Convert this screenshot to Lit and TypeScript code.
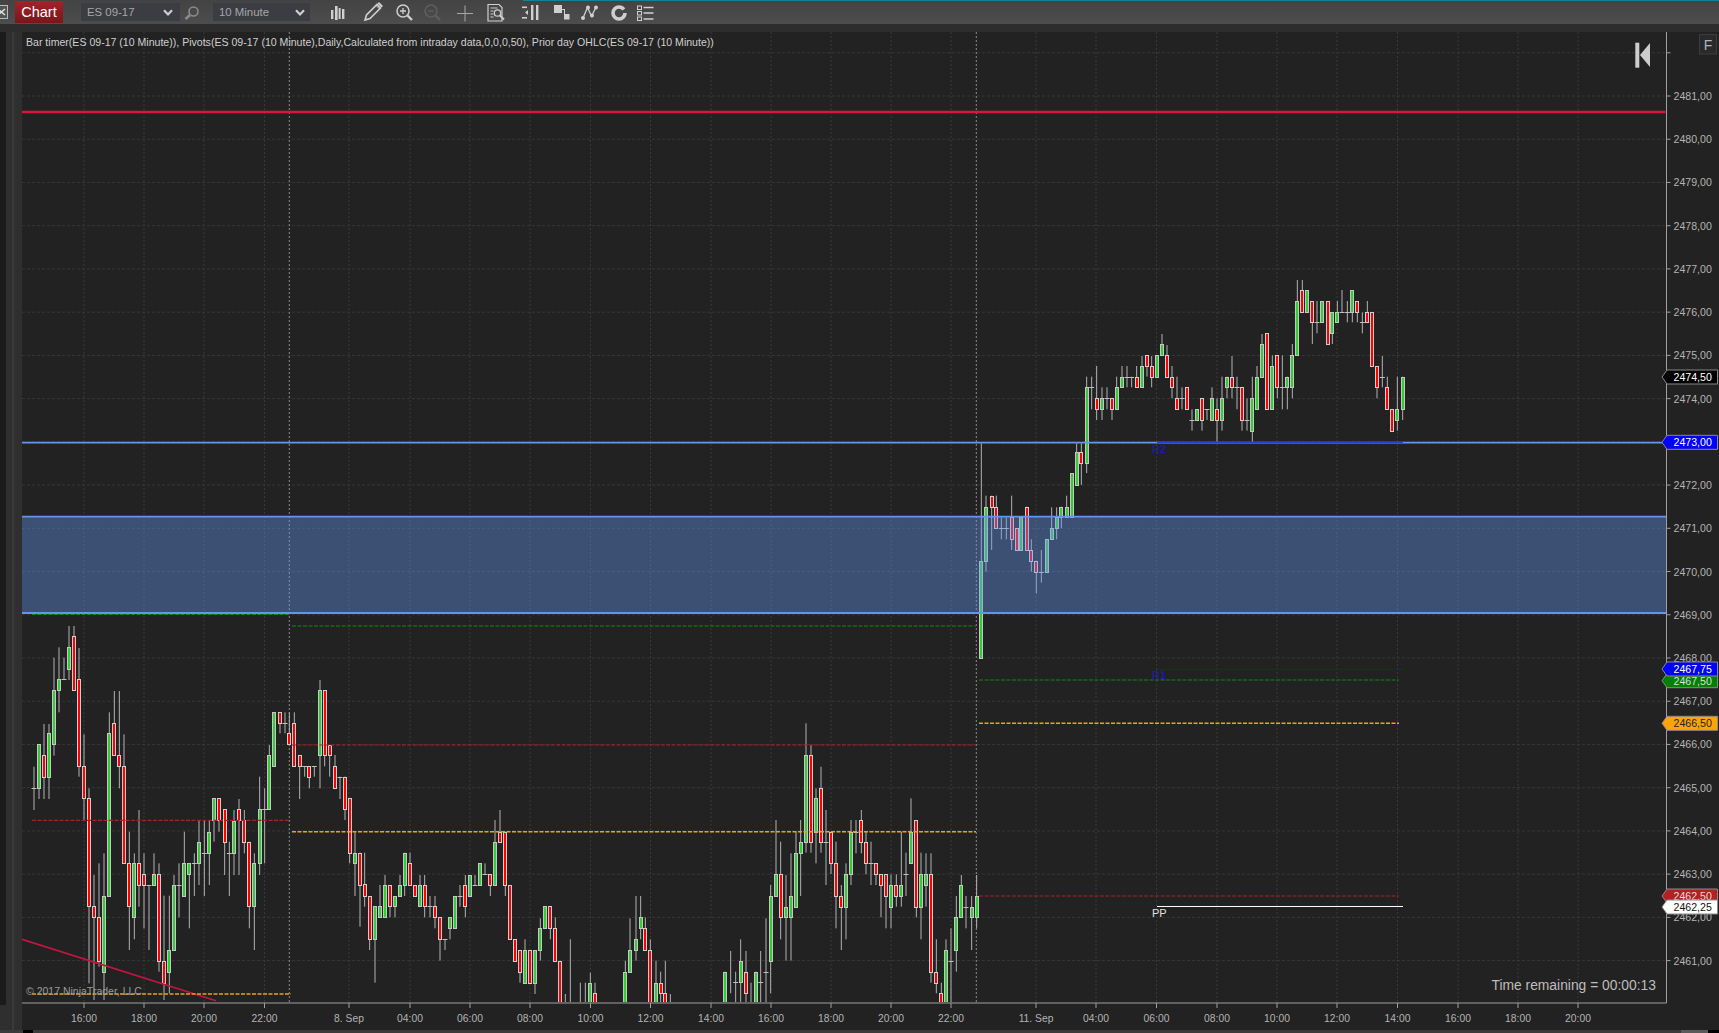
// NinjaTrader style chart window
import { LitElement, html, css, svg } from 'lit';
import { customElement } from 'lit/decorators.js';

const PLOT = { left: 22, right: 1666.5, top: 32, bottom: 1003 };
const priceY = (p: number) => 96 + (2481 - p) * 43.23;

// each row: x top bottom wickTop wickBottom kind, measured in 3x crops
const GROUPS: { ox: number; oy: number; rows: string }[] = [
	{ ox: 0, oy: 620, rows: `102 505 505 440 570 d;117 373 505 373 537 g;132 405 470 312 537 r;147 340 470 312 537 g;162 210 373 113 407 g;177 178 210 82 277 g;192 178 178 113 178 d;207 82 147 18 180 g;222 48 210 18 210 r;237 178 439 84 470 r;252 439 535 343 600 r;267 535 858 505 1090 r;282 858 892 765 1140 r;297 892 1022 730 1040 r;312 827 1055 700 1140 g;328 340 827 277 827 g;343 310 405 213 405 r;358 405 439 213 505 r;372 439 730 343 730 r;388 730 858 635 990 r;403 730 892 700 958 g;417 730 795 570 860 r;432 763 795 700 925 r;447 795 795 795 990 d;462 763 795 700 795 g;477 763 1022 730 1055 r;492 1022 1088 827 1140 r;508 990 1055 827 1120 g;522 795 990 765 990 g;537 795 795 730 892 d;553 730 828 635 828 g;568 730 763 730 925 g;583 730 730 700 828 d;597 665 730 603 795 g;613 698 698 603 828 d;628 635 698 600 795 g;642 535 600 535 665 g;657 535 600 535 635 r;674 568 665 568 765 r;688 698 698 665 828 d;702 603 698 570 765 g;717 568 600 537 765 r;733 600 665 570 700 r;748 665 858 665 925 r;763 730 858 700 990 g;779 568 730 470 765 g;794 568 568 505 730 d;808 405 568 375 568 g;822 276 439 276 439 g;840 276 310 276 340 r;855 310 310 277 340 d;868 340 373 277 373 r;883 310 439 277 439 r;899 405 439 405 537 r;914 439 439 439 470 d;928 439 470 439 505 r;943 439 439 439 470 d;960 210 405 180 505 g;974 210 405 210 439 r;989 375 405 375 470 r;1005 439 505 405 505 r;1020 470 470 470 537 d;1035 470 568 470 600 r;1049 535 698 535 730 r;1065 698 730 635 828 g` },
	{ ox: 360, oy: 660, rows: `0 578 675 578 800 r;14 673 708 578 740 r;29 708 838 708 870 r;45 738 838 738 968 g;60 738 772 675 772 g;75 675 772 645 772 g;90 675 738 675 772 r;105 708 738 708 772 g;120 675 708 645 708 g;134 578 675 578 708 g;150 610 675 578 675 r;165 675 708 675 708 r;180 675 738 645 738 g;194 675 738 645 772 r;210 738 738 708 772 d;225 738 772 708 805 r;240 772 838 772 902 r;255 838 838 838 870 d;270 772 805 772 838 g;285 708 805 708 805 g;300 708 708 675 740 d;316 675 738 645 772 r;331 645 708 645 708 g;345 675 675 645 675 d;360 610 675 610 675 g;375 643 643 610 643 d;391 643 675 643 708 r;405 545 675 480 675 g;420 515 545 450 545 r;436 515 675 515 708 r;451 675 838 675 838 r;465 838 902 838 902 r;480 870 935 870 968 r;495 870 968 838 968 g;511 870 968 870 968 r;525 870 968 870 1002 g;541 805 870 775 902 g;556 738 805 738 805 g;571 738 805 738 838 r;586 805 902 772 902 r;601 902 1030 902 1030 r;616 1002 1002 1002 1030 w;631 838 838 838 1030 w;661 968 968 968 1030 w;676 968 968 968 1030 w;691 968 1030 938 1030 g;705 1000 1030 968 1030 r;796 935 1030 902 1030 g;810 870 935 775 935 g;828 838 870 708 902 g;842 772 805 708 838 g;856 805 870 772 870 r;871 870 1030 838 1030 r;888 968 1030 902 1030 g;902 968 1000 935 1030 r;916 1000 1030 902 1030 r;931 1002 1002 1002 1030 w` },
	{ ox: 720, oy: 690, rows: `15 845 945 845 945 g;32 783 783 783 910 w;47 877 877 845 945 d;62 812 877 748 945 g;78 845 910 783 945 r;93 878 878 878 945 w;107 845 945 845 945 g;122 877 877 783 945 d;138 845 845 685 945 d;152 617 812 585 910 g;168 552 617 390 617 g;182 552 682 455 748 r;198 650 682 555 812 g;213 617 682 490 812 g;228 488 650 425 650 g;242 455 488 390 618 g;258 195 455 100 488 g;273 195 455 165 488 r;288 325 425 295 520 g;303 295 455 230 488 r;318 455 455 360 585 d;333 425 520 425 552 r;348 520 618 455 715 r;364 618 650 585 780 r;378 552 650 520 748 g;393 425 552 390 585 g;408 425 425 390 490 d;424 390 455 360 490 r;438 455 520 425 553 r;453 520 520 455 585 d;468 520 553 520 585 r;483 553 585 553 682 r;498 553 618 553 715 r;513 585 650 553 715 g;529 585 618 553 650 r;544 585 618 425 650 g;558 553 553 488 618 d;573 425 520 325 520 g;589 390 650 390 682 r;603 553 650 488 748 g;618 553 585 490 650 g;633 553 845 490 878 r;649 845 878 748 910 r;664 910 945 878 945 r;678 780 945 748 945 g;693 812 812 715 945 d;709 682 780 618 845 g;724 585 682 555 682 g;738 650 650 618 715 d;755 650 682 618 780 g;770 618 682 555 715 g` },
	{ ox: 960, oy: 430, rows: `64 392 683 40 683 g;78 230 392 197 425 g;95 197 230 197 360 r;109 230 295 197 295 r;124 295 295 262 328 d;139 295 295 262 328 d;155 262 328 197 360 r;170 295 360 295 360 r;184 262 360 262 360 g;200 230 360 230 360 r;214 360 392 328 425 r;229 392 425 392 490 r;244 425 425 360 458 d;260 328 425 328 425 g;275 295 328 232 328 g;290 262 295 232 328 g;304 230 262 230 295 g;320 230 262 197 262 g;335 130 262 130 262 g;350 67 165 40 165 g;364 67 100 40 165 r` },
	{ ox: 1060, oy: 270, rows: `80 352 579 320 609 g;95 352 352 320 418 d;110 385 418 288 450 r;126 385 418 352 450 g;141 385 385 352 418 d;156 385 418 385 450 r;170 352 418 320 418 g;186 320 352 288 352 g;201 320 320 288 352 d;215 320 320 320 352 d;230 320 352 288 352 r;246 287 352 258 352 g;261 256 288 256 320 r;275 288 320 258 352 r;290 256 320 256 320 g;306 222 256 192 256 g;321 256 320 225 320 r;336 320 352 288 385 r;351 385 418 320 418 r;366 385 385 352 418 d;381 352 418 352 418 r;396 450 450 418 482 d;411 418 450 418 450 g;426 385 450 385 482 r;441 418 418 418 450 d;456 385 450 352 450 g;471 418 450 385 515 r;486 385 450 320 482 g;501 320 352 320 385 g;516 320 352 258 385 r;531 352 352 320 418 d;546 352 450 352 482 r;561 450 450 385 482 d;577 385 482 320 515 g;591 320 418 288 418 g;606 222 320 192 320 g;621 190 418 190 418 r;637 288 418 256 418 g;652 256 352 256 385 r;667 352 352 256 418 d;682 320 352 320 418 g;697 256 352 222 385 g;712 93 256 30 256 g;727 60 127 30 127 r;741 60 127 60 127 g;757 93 157 93 222 r;771 157 157 93 190 d;786 93 157 93 157 g;803 93 222 93 222 r;817 127 190 127 222 g;832 127 157 93 157 g;846 127 127 60 127 d;862 127 127 93 157 d;877 60 127 60 157 g;892 93 127 93 157 r;907 157 157 127 190 d;922 127 157 93 157 r;937 127 288 127 288 r;951 288 352 288 385 r;967 320 320 258 352 d;982 352 418 320 418 r;997 418 482 418 482 r;1012 418 450 320 482 g;1028 320 418 320 450 g` },
];

const parseBars = () =>
	GROUPS.flatMap((g) =>
		g.rows.split(';').map((row) => {
			const [x, top, bot, wt, wb, kind] = row.trim().split(' ');
			return {
				x: g.ox + Number(x) / 3,
				top: g.oy + Number(top) / 3,
				bot: g.oy + Number(bot) / 3,
				wt: g.oy + Number(wt) / 3,
				wb: g.oy + Number(wb) / 3,
				kind,
			};
		}),
	);

const GRID_X = [84, 144, 204, 264.5, 349, 410, 470, 530, 590.5, 650.5, 711, 771, 831, 891, 951, 1036, 1096, 1156.5, 1217, 1277, 1337, 1397.5, 1458, 1518, 1578];
const TIME_LABELS = ['16:00', '18:00', '20:00', '22:00', '8. Sep', '04:00', '06:00', '08:00', '10:00', '12:00', '14:00', '16:00', '18:00', '20:00', '22:00', '11. Sep', '04:00', '06:00', '08:00', '10:00', '12:00', '14:00', '16:00', '18:00', '20:00'];
const PRICES = Array.from({ length: 21 }, (_, i) => 2461 + i);

const LEVELS = [
	{ x1: 32, x2: 289, y: 614.5, cls: 'lv-green' },
	{ x1: 292, x2: 976, y: 626, cls: 'lv-green' },
	{ x1: 979, x2: 1399, y: 680, cls: 'lv-green' },
	{ x1: 32, x2: 291, y: 820.3, cls: 'lv-red' },
	{ x1: 292, x2: 976, y: 745, cls: 'lv-red' },
	{ x1: 979, x2: 1399, y: 896, cls: 'lv-red' },
	{ x1: 32, x2: 291, y: 994, cls: 'lv-orange' },
	{ x1: 292, x2: 976, y: 831.7, cls: 'lv-orange' },
	{ x1: 979, x2: 1399, y: 723.3, cls: 'lv-orange' },
];

const TAGS = [
	{ y: 377, text: '2474,50', fill: '#000', color: '#fff' },
	{ y: 442.3, text: '2473,00', fill: '#0000ff', color: '#fff' },
	{ y: 680.7, text: '2467,50', fill: '#008000', color: '#ddd' },
	{ y: 669, text: '2467,75', fill: '#0000ff', color: '#fff' },
	{ y: 723.3, text: '2466,50', fill: '#ffa500', color: '#222' },
	{ y: 896, text: '2462,50', fill: '#b22222', color: '#ddd' },
	{ y: 907, text: '2462,25', fill: '#fff', color: '#111' },
];

const LEGEND = 'Bar timer(ES 09-17 (10 Minute)), Pivots(ES 09-17 (10 Minute),Daily,Calculated from intraday data,0,0,0,50), Prior day OHLC(ES 09-17 (10 Minute))';

@customElement('app-root')
export class AppRoot extends LitElement {
	static styles = css`
		:host {
			display: block;
			width: 1719px;
			height: 1033px;
			background: #222;
			overflow: hidden;
			font-family: "Liberation Sans", Arial, sans-serif;
		}
		.toolbar {
			height: 24px;
			display: flex;
			align-items: center;
			position: relative;
			background: linear-gradient(#434343, #4d4d4d);
		}
		.teal {
			position: absolute;
			left: 523px;
			right: 0;
			top: 0;
			height: 1px;
			background: #0f8496;
		}
		.close {
			width: 8px;
			height: 14px;
			margin-right: 7px;
			background: #555;
			border: 1px solid #bbb;
			border-left: none;
			box-sizing: border-box;
		}
		.close svg { display: block; }
		.chart-btn {
			width: 48px;
			height: 22px;
			margin-right: 18px;
			background: linear-gradient(#a0242b, #7a1519);
			color: #fff;
			font-size: 14.5px;
			line-height: 22px;
			text-align: center;
		}
		.select {
			height: 18px;
			display: flex;
			align-items: center;
			justify-content: space-between;
			box-sizing: border-box;
			padding: 0 7px 0 6px;
			background: #3c3d42;
			color: #a6a6a6;
			font-size: 11.4px;
		}
		.select.instrument { width: 99px; }
		.select.period { width: 97px; padding-right: 5px; }
		.find { width: 33px; height: 24px; display: block; }
		.icons { display: flex; align-items: center; margin-left: 26px; }
		.icons svg { display: block; flex: none; }
		.strip { height: 8px; background: #2d2d2d; }
		.body { display: flex; height: 998px; }
		.rail {
			width: 22px;
			flex: none;
			display: flex;
			background: #2f2f2f;
		}
		.rail-dark { width: 6px; height: 973px; background: #1b1b1b; }
		.rail-light { width: 2px; margin-left: 6px; background: #3a3a3a; }
		.plot { display: block; flex: none; }
		.bottom { height: 3px; background: #3a3a3a; display: flex; }
		.corner { width: 10px; margin-left: 23px; background: #000; }
		.thumb { width: 27px; margin-left: auto; background: #5a5a5a; }
		.end { width: 11px; background: #000; }
		.grid-h { stroke: #373737; stroke-width: 1; stroke-dasharray: 3 2; fill: none; }
		.grid-v { stroke: #383838; stroke-width: 1; stroke-dasharray: 2 2; fill: none; }
		.session { stroke: #8c8c8c; stroke-width: 1; stroke-dasharray: 2 2; }
		.wick { stroke: #b2b2b2; stroke-width: 1; }
		.body-g { fill: #32cd32; stroke: #c6c6c6; stroke-width: 1; }
		.body-r { fill: #ff0000; stroke: #d0d0d0; stroke-width: 1; }
		.doji { stroke: #c0c0c0; stroke-width: 1; }
		.zone { fill: rgba(100, 149, 237, 0.4); }
		.zone-line { stroke: #6495ed; stroke-width: 1.8; }
		.resist { stroke: #dc143c; stroke-width: 2.5; }
		.trend { stroke: #c5153f; stroke-width: 1.6; }
		.lv-green { stroke: #0e8a0e; stroke-width: 1.2; stroke-dasharray: 4 1.5; }
		.lv-red { stroke: #a82222; stroke-width: 1.2; stroke-dasharray: 4 1.5; }
		.lv-orange { stroke: #f0a010; stroke-width: 1.4; stroke-dasharray: 4 1.5; }
		.pivot-r2 { stroke: #1f3fd8; stroke-width: 1.4; }
		.pivot-r1 { stroke: #1414c0; stroke-width: 1; }
		.pivot-white { stroke: #fff; stroke-width: 1; }
		.axis { stroke: #a0a0a0; stroke-width: 1; }
		.legend { fill: #cfcfcf; font-size: 10.57px; }
		.copy { fill: #9a9a9a; font-size: 10.5px; }
		.tick-label { fill: #b4b4b4; font-size: 10.3px; text-anchor: middle; }
		.price-label { fill: #b4b4b4; font-size: 10.6px; }
		.tag { stroke: #8a8a8a; stroke-width: 1; }
		.tag-text { font-size: 10.6px; }
		.pivot-label { font-size: 11px; }
		.remaining { fill: #bdbdbd; font-size: 13.85px; text-anchor: end; }
		.f-box { fill: #2a2a2a; stroke: #3c3c3c; stroke-width: 1; }
		.f-text { fill: #a9b4c0; font-size: 14px; text-anchor: middle; }
		.jump { fill: #cdcdcd; }
	`;

	chevron() {
		return html`<svg width="10" height="7" viewBox="0 0 10 7"><path d="M1 1.2 5 5.4 9 1.2" fill="none" stroke="#d0d0d0" stroke-width="2.2"/></svg>`;
	}

	icons() {
		const c = '#cfcfcf';
		return html`
			<svg width="24" height="24" viewBox="0 0 24 24" style="margin-left:-6px"><g fill=${c}><rect x="1" y="10" width="2.4" height="9"/><rect x="5" y="6" width="2.6" height="14"/><rect x="8.6" y="8" width="2" height="11"/><rect x="12" y="9" width="2.4" height="10"/></g></svg>
			<svg width="24" height="24" viewBox="0 0 24 24" style="margin-left:8px"><g fill="none" stroke=${c}><path d="M3 20 4.5 15 15 4.5 18.5 8 8 18.5Z" stroke-width="1.6"/><path d="M14 5.5 17.5 9" stroke-width="1"/></g><path d="M15.5 3.5 17 2 21 6 19.5 7.5Z" fill=${c}/></svg>
			<svg width="24" height="24" viewBox="0 0 24 24" style="margin-left:6px"><g fill="none" stroke=${c}><circle cx="11" cy="11" r="6" stroke-width="1.5"/><path d="M8 11h6M11 8v6" stroke-width="1.3"/><path d="M15.5 15.5 20 20" stroke-width="2.4"/></g></svg>
			<svg width="24" height="24" viewBox="0 0 24 24" style="margin-left:4px"><g fill="none" stroke="#5f5f5f"><circle cx="11" cy="11" r="6" stroke-width="1.5"/><path d="M8 11h6" stroke-width="1.3"/><path d="M15.5 15.5 20 20" stroke-width="2.4"/></g></svg>
			<svg width="24" height="24" viewBox="0 0 24 24" style="margin-left:9px"><path d="M4 13.5h16M12 5.5v16" stroke="#a8a8a8" stroke-width="1" fill="none"/></svg>
			<svg width="24" height="24" viewBox="0 0 24 24" style="margin-left:7px"><g fill="none" stroke=${c}><path d="M4 4.5h11l3 3V21H4Z" stroke-width="1.2"/><path d="M6.5 8h7M6.5 11h3M6.5 14h3M6.5 17h3" stroke-width="1"/><circle cx="13.5" cy="13" r="3.2" stroke-width="1.3"/><path d="M15.8 15.4 20 19.5" stroke-width="2"/></g></svg>
			<svg width="24" height="24" viewBox="0 0 24 24" style="margin-left:12px"><g fill=${c}><rect x="2" y="6.5" width="5" height="1.6"/><rect x="2" y="17" width="5" height="1.6"/><path d="M8 10v5l-3-2.5Z"/><rect x="11" y="5" width="2.4" height="15"/><rect x="16" y="5" width="2.4" height="15"/></g></svg>
			<svg width="24" height="24" viewBox="0 0 24 24" style="margin-left:8px"><g fill=${c}><rect x="2" y="5" width="8" height="8"/><rect x="12" y="14" width="5.5" height="5.5"/><path d="M10 9h3v5h-1v-4h-2Z"/></g></svg>
			<svg width="24" height="24" viewBox="0 0 24 24" style="margin-left:3px"><g fill=${c}><path d="M4 18 8.500 7.500 12.500 16 17 7.500" fill="none" stroke=${c} stroke-width="1.3"/><circle cx="4" cy="18" r="2"/><circle cx="9" cy="7.500" r="2"/><circle cx="13" cy="15.500" r="2"/><circle cx="17" cy="7.500" r="2"/></g></svg>
			<svg width="24" height="24" viewBox="0 0 24 24" style="margin-left:4px"><circle cx="12" cy="13" r="6" fill="none" stroke=${c} stroke-width="3.6" stroke-dasharray="33 4.700"/></svg>
			<svg width="24" height="24" viewBox="0 0 24 24" style="margin-left:3px"><g fill="none" stroke=${c}><rect x="3.500" y="6" width="4" height="3.500" stroke-width="1"/><rect x="3.500" y="11.500" width="4" height="3.500" stroke-width="1"/><rect x="3.500" y="17" width="4" height="3.500" stroke-width="1"/><path d="M9.500 7.500h10M9.500 13h10M9.500 19h10" stroke-width="1.6"/></g></svg>
		`;
	}

	renderChart() {
		const bars = parseBars();
		return svg`
			<defs><clipPath id="plot-clip"><rect x=${PLOT.left} y=${PLOT.top} width=${PLOT.right - PLOT.left} height=${PLOT.bottom - PLOT.top - 1}/></clipPath></defs>
			${[2482, ...PRICES].map((p) => svg`<line class="grid-h" x1=${PLOT.left} x2=${PLOT.right} y1=${priceY(p)} y2=${priceY(p)}/>`)}
			${GRID_X.map((x) => svg`<line class="grid-v" x1=${x} x2=${x} y1=${PLOT.top} y2=${PLOT.bottom}/>`)}
			<line class="session" x1="289.3" x2="289.3" y1=${PLOT.top} y2=${PLOT.bottom}/>
			<line class="session" x1="976.3" x2="976.3" y1=${PLOT.top} y2=${PLOT.bottom}/>
			<g clip-path="url(#plot-clip)">
				${bars.map((b) => svg`<line class="wick" x1=${b.x} x2=${b.x} y1=${b.wt} y2=${b.wb}/>`)}
				${bars.map((b) => {
					if (b.kind === 'd') return svg`<line class="doji" x1=${b.x - 2.5} x2=${b.x + 2.5} y1=${Math.round(b.top) + 0.5} y2=${Math.round(b.top) + 0.5}/>`;
					if (b.kind === 'w') return null;
					const y = Math.round(b.top);
					// snap to whole pixels so the coloured core stays saturated
					return svg`<rect class=${b.kind === 'g' ? 'body-g' : 'body-r'} x=${Math.round(b.x - 2) + 0.5} y=${y + 0.5} width="3" height=${Math.round(b.bot) - y}/>`;
				})}
				<line class="trend" x1="22" y1="939.3" x2="216" y2="1000.7"/>
			</g>
			${LEVELS.map((l) => svg`<line class=${l.cls} x1=${l.x1} x2=${l.x2} y1=${l.y} y2=${l.y}/>`)}
			<rect class="zone" x=${PLOT.left} y="516.7" width=${PLOT.right - PLOT.left} height="96.3"/>
			<line class="zone-line" x1=${PLOT.left} x2=${PLOT.right} y1="516.7" y2="516.7"/>
			<line class="zone-line" x1=${PLOT.left} x2=${PLOT.right} y1="613" y2="613"/>
			<line class="zone-line" x1=${PLOT.left} x2=${PLOT.right} y1="442.7" y2="442.7"/>
			<line class="resist" x1=${PLOT.left} x2=${PLOT.right - 1} y1="112" y2="112"/>
			<line class="pivot-r2" x1="1157" x2="1403" y1="442.4" y2="442.4"/>
			<line class="pivot-r1" x1="1157" x2="1403" y1="669.5" y2="669.5"/>
			<line class="pivot-white" x1="1157" x2="1403" y1="906.5" y2="906.5"/>
			<text class="pivot-label" x="1152" y="453" fill="#1a1acd">R2</text>
			<text class="pivot-label" x="1152" y="679" fill="#1a1acd">R1</text>
			<text class="pivot-label" x="1152" y="917" fill="#e0e0e0">PP</text>
			<text class="legend" x="26" y="45.5">${LEGEND}</text>
			<text class="copy" x="26" y="995">© 2017 NinjaTrader, LLC</text>
			<text class="remaining" x="1656" y="990">Time remaining = 00:00:13</text>
			<rect class="jump" x="1635.300" y="42.700" width="4" height="25"/>
			<polygon class="jump" points="1640,55 1650,43 1650,67"/>
			<rect class="f-box" x="1699.500" y="34.500" width="17" height="19.500"/>
			<text class="f-text" x="1708" y="49.500">F</text>
			<line class="axis" x1=${PLOT.right} x2=${PLOT.right} y1=${PLOT.top} y2=${PLOT.bottom}/>
			<line class="axis" x1=${PLOT.left} x2=${PLOT.right} y1=${PLOT.bottom} y2=${PLOT.bottom}/>
			${GRID_X.map((x, i) => svg`
				<line class="axis" x1=${x} x2=${x} y1=${PLOT.bottom} y2=${PLOT.bottom + 5}/>
				<text class="tick-label" x=${x} y="1022">${TIME_LABELS[i]}</text>`)}
			${[2482, ...PRICES].map((p) => svg`<line class="axis" x1=${PLOT.right} x2=${PLOT.right + 4} y1=${priceY(p)} y2=${priceY(p)}/>`)}
			${PRICES.filter((p) => p !== 2473).map((p) => svg`<text class="price-label" x="1673.500" y=${priceY(p) + 4}>${p},00</text>`)}
			${TAGS.map((t) => svg`
				<polygon class="tag" fill=${t.fill} points="1662,${t.y} 1667,${t.y - 7} 1717.500,${t.y - 7} 1717.500,${t.y + 7} 1667,${t.y + 7}"/>
				<text class="tag-text" fill=${t.color} x="1673.500" y=${t.y + 4}>${t.text}</text>`)}
		`;
	}

	render() {
		return html`
			<div class="toolbar">
				<div class="teal"></div>
				<div class="close"><svg width="7" height="12" viewBox="0 0 7 12"><path d="M-2 3 5 9M5 3-2 9" stroke="#ddd" stroke-width="1.6"/></svg></div>
				<div class="chart-btn">Chart</div>
				<div class="select instrument"><span>ES 09-17</span>${this.chevron()}</div>
				<svg class="find" viewBox="0 0 33 24"><g fill="none" stroke="#8a8a8a"><circle cx="13.500" cy="11.500" r="4.500" stroke-width="1.600"/><path d="M10 15 5.500 19" stroke-width="2.600"/></g></svg>
				<div class="select period"><span>10 Minute</span>${this.chevron()}</div>
				<div class="icons">${this.icons()}</div>
			</div>
			<div class="strip"></div>
			<div class="body">
				<div class="rail"><div class="rail-dark"></div><div class="rail-light"></div></div>
				<svg class="plot" width="1697" height="998" viewBox="22 32 1697 998">${this.renderChart()}</svg>
			</div>
			<div class="bottom"><div class="corner"></div><div class="thumb"></div><div class="end"></div></div>
		`;
	}
}
